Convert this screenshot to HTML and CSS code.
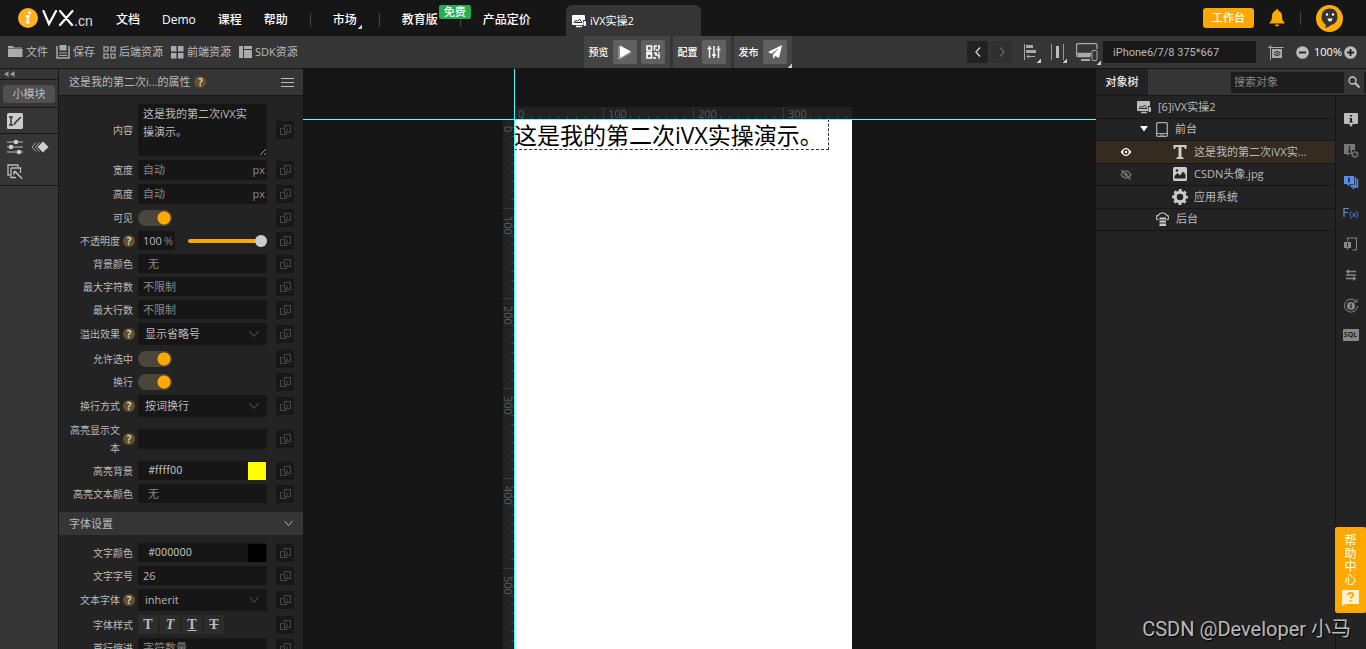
FILE: index.html
```html
<!DOCTYPE html>
<html lang="zh-CN">
<head>
<meta charset="utf-8">
<title>iVX实操2</title>
<link rel="stylesheet" href="styles.css">
</head>
<body>
<svg class="sprite" aria-hidden="true">
  <symbol id="link" viewBox="0 0 18 18"><path d="M8.500 7.500V4.500h6v7h-3M7 7.500H4.500v6h6V11M8.500 7v4.500h2.500v-4" fill="none" stroke="currentColor"/></symbol>
  <symbol id="chev" viewBox="0 0 12 8"><path d="M1.500 1l4.500 5.500L10.500 1" fill="none" stroke="currentColor"/></symbol>
  <symbol id="app" viewBox="0 0 16 14"><path d="M2 1h11a1 1 0 0 1 1 1v4h-2v5H2a1 1 0 0 1-1-1V2a1 1 0 0 1 1-1z" fill="currentColor"/><path d="M3 8.500l2-2.500 1.500 1.500L8.500 5l2.500 3.500z" fill="none" stroke="#333"/><path d="M5 12.500h6" stroke="currentColor" stroke-width="1.500"/><rect x="12.500" y="7" width="2.500" height="5" rx="1" fill="currentColor"/></symbol>
  <symbol id="info" viewBox="0 0 16 16"><path d="M2 1h12a1 1 0 0 1 1 1v9a1 1 0 0 1-1 1h-4l-2 3-2-3H2a1 1 0 0 1-1-1V2a1 1 0 0 1 1-1z" fill="currentColor"/><path d="M7 3h2v1.500H7zM6.500 6H9v3.500h.7v1H6.300v-1H7V7h-.5z" fill="#232323"/></symbol>
</svg>
<div class="app">
  <header class="topbar">
    <a class="logo" href="#" aria-label="iVX.cn">
      <svg width="20" height="20" viewBox="0 0 20 20"><circle cx="10" cy="10" r="10" fill="#ffb11f"/><circle cx="11.500" cy="4.700" r="1.500" fill="#fff"/><path d="M7.500 8.300h3.200l-1.600 5.700q-.1 1.500 2.400 0" fill="none" stroke="#fff" stroke-width="2"/></svg>
      <svg width="32" height="16" viewBox="0 0 32 16"><path d="M1.500 1l5.500 13L14 1M18 1l12 14M30.500 1L18 15" fill="none" stroke="#fff" stroke-width="2.200" stroke-linecap="round"/></svg>
      <span>.cn</span>
    </a>
    <nav class="nav">
      <a href="#">文档</a><a href="#">Demo</a><a href="#">课程</a><a href="#">帮助</a>
      <i class="rule"></i><a href="#" class="more">市场</a><i class="rule"></i>
      <a href="#" class="edu">教育版<b>免费</b></a><i class="rule"></i><a href="#">产品定价</a>
    </nav>
    <a class="tab" href="#"><svg width="16" height="14"><use href="#app"/></svg>iVX实操2</a>
    <div class="account">
      <button class="work">工作台</button>
      <svg width="16" height="18" viewBox="0 0 16 18"><path d="M8 0q1.300 0 1.300 1.500Q13 3 13 7q0 5 2.500 6.500v1H.5v-1Q3 12 3 7q0-4 3.700-5.500Q6.700 0 8 0zM6 15.500h4q0 2-2 2t-2-2z" fill="#ffa800"/></svg>
      <i class="rule"></i>
      <svg width="27" height="27" viewBox="0 0 27 27"><circle cx="13.500" cy="13.500" r="13.500" fill="#ffab0a"/><path d="M13.500 3.500q8 0 8 8.500 0 6.500-6.500 8Q12 23 8 23.500q2.500-1.500 1.500-4Q5.500 17 5.500 12q0-8 8-8.500z" fill="#333"/><g fill="#fff"><circle cx="11" cy="9.500" r="1.200"/><circle cx="17" cy="9.500" r="1.200"/><path d="M11.500 13.500h5q-.5 3-2.500 3t-2.500-3z"/></g></svg>
    </div>
  </header>

  <div class="toolbar">
    <div class="files">
      <button><svg width="15" height="14" viewBox="0 0 15 14"><path d="M0 1h5l1 1.500h8v1H0zM0 4h14.500v8H0z" fill="#aaa"/></svg>文件</button>
      <button><svg width="14" height="14" viewBox="0 0 14 14"><path d="M1 1v12h12V1" fill="none" stroke="#aaa" stroke-width="1.500"/><path d="M4 0h6v5H4zM3 8h8M3 10.500h8" fill="#aaa" stroke="#aaa"/></svg>保存</button>
      <button><svg width="13" height="13" viewBox="0 0 13 13"><path d="M1 1h4v4H1zM8 1h4v4H8zM1 8h4v4H1zM8 8h4v4H8z" fill="none" stroke="#999" stroke-width="1.500"/></svg>后端资源</button>
      <button><svg width="13" height="13" viewBox="0 0 13 13"><path d="M0 0h5.500v5.500H0zM7 0h5.500v5.500H7zM0 7h5.500v5.500H0zM7 7h5.500v5.500H7z" fill="#aaa"/></svg>前端资源</button>
      <button><svg width="13" height="13" viewBox="0 0 13 13"><path d="M0 0h4v12H0zM5 0h8v3H5zM5 4h8v8H5z" fill="#aaa"/></svg>SDK资源</button>
    </div>
    <div class="runs">
      <div class="run"><span>预览</span>
        <button aria-label="播放"><svg width="16" height="16" viewBox="0 0 16 16"><path d="M3 1.500l11 6-11 6.500z" fill="#fff"/><path d="M2 2v13l12-6.500" fill="none" stroke="#bbb"/></svg></button>
        <button aria-label="二维码"><svg width="16" height="16" viewBox="0 0 16 16"><path d="M2 2h4.500v4.500H2zM9.500 1.500v5M9.500 2H12M14 1v4M14 6h-3M2 10h4.500v4H2zM9 9h2v2h3v3.500M8 14h3M1 8.500h6M14 8v1.500" fill="none" stroke="#fff" stroke-width="1.600"/></svg></button></div>
      <div class="run"><span>配置</span><button aria-label="配置"><svg width="14" height="14" viewBox="0 0 14 14"><path d="M2.500 1v12M7 1v12M11.500 1v12M.5 3.500h4M5 10h4M9.500 4.500h4" stroke="#fff" stroke-width="1.400"/></svg></button></div>
      <div class="run more"><span>发布</span><button aria-label="发布"><svg width="16" height="16" viewBox="0 0 16 16"><path d="M15 1L1 8l3.500 1.700L12 4 6 10.500V15l2.300-3 3.700 2z" fill="#fff"/></svg></button></div>
    </div>
    <div class="view">
      <button class="step" aria-label="后退"><svg width="8" height="12" viewBox="0 0 8 12"><path d="M6 1.500L2 6l4 4.500" fill="none" stroke="#ccc" stroke-width="1.400"/></svg></button>
      <button class="step off" aria-label="前进"><svg width="8" height="12" viewBox="0 0 8 12"><path d="M2 1.500L6 6l-4 4.500" fill="none" stroke="#666" stroke-width="1.200"/></svg></button>
      <button class="more align" aria-label="对齐"><svg width="14" height="16" viewBox="0 0 14 16"><path d="M.5 0v16" stroke="#aaa"/><path d="M2 1h7v3H2zM2 6h10v3H2z" fill="#aaa"/><path d="M3 12.500h8M5 10.500l-2 2 2 2" fill="none" stroke="#aaa"/></svg></button>
      <button class="more spread" aria-label="分布"><svg width="13" height="16" viewBox="0 0 13 16"><path d="M.5 0v16M12.500 0v16" stroke="#999"/><path d="M5 2h3v12H5z" fill="#bbb"/></svg></button>
      <button class="more device" aria-label="设备"><svg width="22" height="19" viewBox="0 0 22 19"><path d="M14.500 13.500H2a1.500 1.500 0 0 1-1.500-1.500V2A1.500 1.500 0 0 1 2 .7h17.500A1.500 1.500 0 0 1 21 2v4M1 10.500h14" fill="none" stroke="#aaa" stroke-width="1.300"/><path d="M2 11h13v2H2zM5 16h9v2H5z" fill="#aaa"/><rect x="16" y="7.500" width="5" height="10" rx="1" fill="none" stroke="#aaa"/></svg></button>
      <input class="model" aria-label="设备型号" value="iPhone6/7/8 375*667">
      <button aria-label="截图"><svg width="16" height="15" viewBox="0 0 16 15"><path d="M2.500 0v15M0 2.500h15.500" stroke="#aaa"/><path d="M4 4h10v9H4z" fill="#aaa"/><ellipse cx="9" cy="8.500" rx="3" ry="2" fill="none" stroke="#333"/><circle cx="9" cy="8.500" r="1" fill="#333"/></svg></button>
      <button aria-label="缩小" class="minus"><svg width="13" height="13" viewBox="0 0 13 13"><circle cx="6.500" cy="6.500" r="6.300" fill="#bbb"/><path d="M3 6.500h7" stroke="#222" stroke-width="1.800"/></svg></button>
      <span class="pct">100%</span>
      <button aria-label="放大"><svg width="13" height="13" viewBox="0 0 13 13"><circle cx="6.500" cy="6.500" r="6.300" fill="#bbb"/><path d="M3 6.500h7M6.500 3v7" stroke="#222" stroke-width="1.800"/></svg></button>
    </div>
  </div>

  <main class="main">
    <aside class="rail">
      <div class="fold"><svg width="11" height="6" viewBox="0 0 11 6"><path d="M4.500 0v6L0 3zM10.500 0v6L6 3z" fill="#999"/></svg></div>
      <div class="mod"><button>小模块</button></div>
      <div class="tools"><svg width="16" height="16" viewBox="0 0 16 16"><rect width="16" height="16" rx="1.500" fill="#ccc"/><path d="M2 4h4M4 4v8M2 12h4M7 12l1-2 6-6" fill="none" stroke="#333" stroke-width="1.500"/></svg></div>
      <div class="tools pair">
        <svg width="16" height="16" viewBox="0 0 16 16"><path d="M0 3h16M0 8h16M0 13h16" stroke="#bbb"/><circle cx="9" cy="3" r="2.300" fill="#ccc"/><circle cx="4" cy="8" r="2.300" fill="#ccc"/><circle cx="12" cy="13" r="2.300" fill="#ccc"/></svg>
        <svg width="18" height="12" viewBox="0 0 18 12"><path d="M12 .5L17.500 6 12 11.500 6.500 6z" fill="#ccc"/><path d="M5 1.500L1 6l4 4.500M8.500 1.500L4.500 6l4 4.500" fill="none" stroke="#aaa"/></svg>
        <svg width="16" height="16" viewBox="0 0 16 16"><path d="M3 11H1V1h10v2M4 4h9.500v5M9 13.500H4V4" fill="none" stroke="#bbb" stroke-width="1.300"/><path d="M6.500 10.500l1-3 2 1M9 8.500l6 6" fill="none" stroke="#ccc" stroke-width="1.400"/></svg>
      </div>
    </aside>

    <form class="props">
      <h2 class="head">这是我的第二次i...的属性<i class="q">?</i><svg class="menu" width="13" height="9" viewBox="0 0 13 9"><path d="M0 .5h13M0 4.500h13M0 8.500h13" stroke="#bbb"/></svg></h2>
      <div class="rows">
        <div class="row area"><label for="f1">内容</label><textarea id="f1">这是我的第二次iVX实操演示。</textarea><button type="button" class="bind" aria-label="绑定"><svg><use href="#link"/></svg></button></div>
        <div class="row tall"><label for="f2">宽度</label><span class="unit"><input id="f2" placeholder="自动"><em>px</em></span><button type="button" class="bind" aria-label="绑定"><svg><use href="#link"/></svg></button></div>
        <div class="row tall"><label for="f3">高度</label><span class="unit"><input id="f3" placeholder="自动"><em>px</em></span><button type="button" class="bind" aria-label="绑定"><svg><use href="#link"/></svg></button></div>
        <div class="row"><label for="f4">可见</label><input id="f4" type="checkbox" class="sw" checked><button type="button" class="bind" aria-label="绑定"><svg><use href="#link"/></svg></button></div>
        <div class="row"><label for="f5" class="hq">不透明度<i class="q">?</i></label><span class="opacity"><span class="unit"><input id="f5" value="100"><em>%</em></span><input type="range" aria-label="不透明度滑块" value="100"></span><button type="button" class="bind" aria-label="绑定"><svg><use href="#link"/></svg></button></div>
        <div class="row"><label for="f6">背景颜色</label><input id="f6" class="in" placeholder="无"><button type="button" class="bind" aria-label="绑定"><svg><use href="#link"/></svg></button></div>
        <div class="row"><label for="f7">最大字符数</label><input id="f7" placeholder="不限制"><button type="button" class="bind" aria-label="绑定"><svg><use href="#link"/></svg></button></div>
        <div class="row"><label for="f8">最大行数</label><input id="f8" placeholder="不限制"><button type="button" class="bind" aria-label="绑定"><svg><use href="#link"/></svg></button></div>
        <div class="row sel"><label for="f9" class="hq">溢出效果<i class="q">?</i></label><span class="drop"><select id="f9"><option>显示省略号</option></select><svg><use href="#chev"/></svg></span><button type="button" class="bind" aria-label="绑定"><svg><use href="#link"/></svg></button></div>
        <div class="row"><label for="f10">允许选中</label><input id="f10" type="checkbox" class="sw" checked><button type="button" class="bind" aria-label="绑定"><svg><use href="#link"/></svg></button></div>
        <div class="row"><label for="f11">换行</label><input id="f11" type="checkbox" class="sw" checked><button type="button" class="bind" aria-label="绑定"><svg><use href="#link"/></svg></button></div>
        <div class="row sel"><label for="f12" class="hq">换行方式<i class="q">?</i></label><span class="drop"><select id="f12"><option>按词换行</option></select><svg><use href="#chev"/></svg></span><button type="button" class="bind" aria-label="绑定"><svg><use href="#link"/></svg></button></div>
        <div class="row two"><label for="f13" class="hq"><span>高亮显示文本</span><i class="q">?</i></label><input id="f13"><button type="button" class="bind" aria-label="绑定"><svg><use href="#link"/></svg></button></div>
        <div class="row"><label for="f14">高亮背景</label><span class="color"><input id="f14" class="in" value="#ffff00"><i class="yellow"></i></span><button type="button" class="bind" aria-label="绑定"><svg><use href="#link"/></svg></button></div>
        <div class="row"><label for="f15">高亮文本颜色</label><input id="f15" class="in" placeholder="无"><button type="button" class="bind" aria-label="绑定"><svg><use href="#link"/></svg></button></div>
      </div>
      <h2 class="head sub">字体设置<svg class="menu" width="11" height="7"><use href="#chev"/></svg></h2>
      <div class="rows">
        <div class="row"><label for="g1">文字颜色</label><span class="color"><input id="g1" class="in" value="#000000"><i class="black"></i></span><button type="button" class="bind" aria-label="绑定"><svg><use href="#link"/></svg></button></div>
        <div class="row"><label for="g2">文字字号</label><input id="g2" value="26"><button type="button" class="bind" aria-label="绑定"><svg><use href="#link"/></svg></button></div>
        <div class="row sel"><label for="g3" class="hq">文本字体<i class="q">?</i></label><span class="drop"><select id="g3"><option>inherit</option></select><svg><use href="#chev"/></svg></span><button type="button" class="bind" aria-label="绑定"><svg><use href="#link"/></svg></button></div>
        <div class="row"><span class="lab">字体样式</span><span class="styles"><button type="button" class="b">T</button><button type="button" class="i">T</button><button type="button" class="u">T</button><button type="button" class="s">T</button></span><button type="button" class="bind" aria-label="绑定"><svg><use href="#link"/></svg></button></div>
        <div class="row"><label for="g5">首行缩进</label><input id="g5" placeholder="字符数量"><button type="button" class="bind" aria-label="绑定"><svg><use href="#link"/></svg></button></div>
      </div>
    </form>

    <section class="stage">
      <div class="ruler top"><span>0</span><span>100</span><span>200</span><span>300</span></div>
      <div class="ruler side-ruler"><span>0</span><span>100</span><span>200</span><span>300</span><span>400</span><span>500</span></div>
      <div class="sheet"><p>这是我的第二次iVX实操演示。</p></div>
      <i class="guide gx"></i><i class="guide gy"></i>
    </section>

    <aside class="objects">
      <div class="ohead"><h2>对象树</h2><div class="search"><input aria-label="搜索对象" placeholder="搜索对象"><button aria-label="搜索"><svg width="12" height="12" viewBox="0 0 12 12"><circle cx="4.500" cy="4.500" r="3.500" fill="none" stroke="#ccc" stroke-width="1.300"/><path d="M7 7l4.500 4.500" stroke="#ccc" stroke-width="1.800"/></svg></button></div></div>
      <div class="obody">
        <ul class="tree">
          <li class="l0"><svg width="16" height="14"><use href="#app"/></svg>[6]iVX实操2</li>
          <li class="l1"><svg class="eye" width="8" height="6" viewBox="0 0 8 6"><path d="M0 0h8L4 5.500z" fill="#fff"/></svg><svg width="12" height="15" viewBox="0 0 12 15"><rect x=".7" y=".7" width="10.600" height="13.600" rx="1" fill="none" stroke="#aaa" stroke-width="1.300"/><path d="M1 11.500h10M4 13h4" stroke="#aaa"/></svg>前台</li>
          <li class="l2 on"><svg class="eye" width="12" height="10" viewBox="0 0 12 10"><path d="M.7 5Q6-3 11.300 5 6 13 .7 5z" fill="#fff"/><circle cx="6" cy="5" r="2.700" fill="#33291f"/><circle cx="6" cy="5" r="1.200" fill="#fff"/></svg><svg width="16" height="16" viewBox="0 0 16 16"><path d="M1.500 1h13v4H13L12 3H9.500v10l2 .5V15h-7v-1.500l2-.5V3H4L3 5H1.500z" fill="#ccc"/></svg>这是我的第二次iVX实...</li>
          <li class="l2"><svg class="eye" width="12" height="11" viewBox="0 0 12 11"><path d="M1 5.500Q6-1.500 11 5.500 6 12.500 1 5.500z" fill="none" stroke="#666" stroke-width="1.500"/><circle cx="6" cy="5.500" r="1.700" fill="#666"/><path d="M1.500 1l9 9.500" stroke="#777" stroke-width="1.400"/></svg><svg width="16" height="16" viewBox="0 0 16 16"><rect x="1" y="1" width="14" height="14" rx="1.500" fill="#ccc"/><path d="M2.500 12.500V10l3-3 2.500 2.500 3-4 2.500 3v4z" fill="#232323"/><circle cx="5" cy="4.500" r="1.300" fill="#232323"/></svg>CSDN头像.jpg</li>
          <li class="l2"><svg width="16" height="16" viewBox="0 0 16 16"><circle cx="8" cy="8" r="4.800" fill="none" stroke="#ccc" stroke-width="3"/><circle cx="8" cy="8" r="6.900" fill="none" stroke="#ccc" stroke-width="2" stroke-dasharray="3 2.420" stroke-dashoffset="1.500"/></svg>应用系统</li>
          <li class="l1"><svg width="13" height="15" viewBox="0 0 13 15"><path d="M2.500 7.500A2 2 0 0 1 2 3.500Q4 .8 6.500.8T11 3.500a2 2 0 0 1-.5 4" fill="none" stroke="#bbb" stroke-width="1.300"/><path d="M3.500 5.500h6.500v2H3.500zM3.500 8.500h6.500v2H3.500zM3.500 11.500h6.500v2.500H3.500z" fill="#ccc"/></svg>后台</li>
        </ul>
        <div class="side">
          <svg class="lit"><use href="#info"/></svg>
          <svg viewBox="0 0 16 16"><path d="M1 1h11v6H9v4H6l-2 2v-2H1z" fill="#777"/><path d="M6.500 3v6M5 9h3" stroke="#232323" stroke-width="1.300"/><circle cx="12" cy="11.500" r="2.600" fill="none" stroke="#777" stroke-width="2" stroke-dasharray="2 .7"/></svg>
          <svg viewBox="0 0 16 16"><path d="M1 2h10v8H7l-2 2-1-2H1z" fill="#568df0"/><path d="M12.500 3v8.500H8l1.500 2M14.500 5v8H11l-1 2" fill="none" stroke="#568df0" stroke-width="1.400"/><path d="M6 3.500v5" stroke="#232323" stroke-width="1.500"/></svg>
          <b class="fx">F<small>(x)</small></b>
          <svg viewBox="0 0 16 16"><path d="M4.500 5V2h9v12h-4" fill="none" stroke="#888"/><path d="M1 6h7v6H5.500L4.500 14l-1-2H1z" fill="#888"/><path d="M4.500 7v4" stroke="#232323"/></svg>
          <svg viewBox="0 0 16 16"><path d="M6 2v5L2.500 4.500zM10 9v5l3.500-2.500z" fill="#888"/><path d="M5 4.500h8M3 8h10M3 11.500h8" stroke="#888" stroke-width="1.400"/></svg>
          <svg viewBox="0 0 16 16"><path d="M13 3.500A6.500 6.500 0 1 0 14.500 8M11 4h3V1" fill="none" stroke="#888"/><circle cx="8" cy="8" r="4" fill="#888"/><path d="M8 5.500v5" stroke="#232323" stroke-width="1.300"/></svg>
          <b class="sql">SQL</b>
        </div>
      </div>
    </aside>
  </main>
</div>
<button class="help"><span>帮助中心</span><svg width="17" height="16" viewBox="0 0 17 16"><path d="M0 0h17v14H4l-4 2z" fill="#fff0cf"/><path d="M6 5q0-2 2.500-2T11 5q0 1.300-1.500 2-.9.500-.9 1.500M8.600 10v1.800" fill="none" stroke="#ffa800" stroke-width="1.800"/></svg></button>
<div class="mark">CSDN @Developer 小马</div>
</body>
</html>
```
FILE: styles.css
```css
* { box-sizing: border-box; }
body { margin: 0; background: #161616; color: #bbb; font: 11px/18px "Open Sans", "Noto Sans CJK SC", sans-serif; color-scheme: dark; overflow: hidden; }
a { color: inherit; text-decoration: none; }
button, input, select, textarea { font: inherit; color: inherit; border: 0; margin: 0; padding: 0; background: none; outline: 0; }
h2, p, ul { margin: 0; padding: 0; font: inherit; list-style: none; }
i, em { font-style: normal; }
svg { display: block; flex: none; }
.sprite { position: absolute; width: 0; height: 0; }
.app { display: grid; grid-template-rows: 36px 32px minmax(0, 1fr); height: 100vh; }

.topbar { display: flex; align-items: center; padding: 0 23px 0 18px; color: #fff; font-size: 12px; font-weight: 500; }
.logo { display: flex; align-items: center; width: 98px; gap: 4px; }
.logo span { font: 14px/16px "Liberation Sans", sans-serif; color: #ddd; padding-top: 5px; margin-left: -4px; }
.nav { display: flex; align-items: center; gap: 22px; padding-top: 3px; white-space: nowrap; }
.rule { width: 1px; height: 14px; background: #444; }
.more { position: relative; }
.more::after { content: ""; position: absolute; right: -5px; bottom: 0; width: 4px; height: 4px; background: linear-gradient(135deg, transparent 50%, #ccc 50%); }
.edu { position: relative; }
.edu b { position: absolute; left: 37px; bottom: 10px; z-index: 1; width: 32px; background: #22b14f; border-radius: 2px; font-size: 11px; line-height: 14px; font-weight: 500; text-align: center; }
.tab { display: flex; align-items: center; align-self: flex-end; gap: 3px; width: 135px; height: 31px; margin-left: 35px; padding-left: 5px; border-radius: 6px 6px 0 0; background: #353535; font-size: 11px; font-weight: 400; }
.account { display: flex; align-items: center; gap: 15px; margin-left: auto; }
.work { width: 51px; height: 20px; background: #ffa800; border-radius: 3px; color: #fff; font-size: 11px; }

.toolbar { display: grid; grid-template-columns: 1fr auto 1fr; padding-left: 9px; background: #353535; }
.toolbar button { display: flex; align-items: center; justify-content: center; }
.files { display: flex; align-items: center; gap: 8px; margin-left: -1px; }
.files button { gap: 3px; white-space: nowrap; }
.runs { display: flex; gap: 3px; color: #fff; }
.run { display: flex; align-items: center; gap: 4px; padding: 0 5px; background: #444; font-size: 10px; font-weight: 500; border-radius: 1px; }
.run button { width: 24px; height: 24px; background: #606060; border-radius: 2px; }
.run.more::after { right: 0; }
.view { display: flex; align-items: center; justify-content: flex-end; gap: 12px; padding-right: 9px; }
.view .step { width: 21px; height: 22px; background: #222; border-radius: 2px; margin-right: -9px; }
.view .step.off { background: #303030; margin-right: 0; }
.view .device { margin-right: -7px; }
.view .align { margin-right: 1px; }
.view .more::after { right: -3px; bottom: -3px; }
.model { width: 153px; height: 22px; padding: 0 10px; background: #181818; }
.model, .color input { font-family: Roboto, "Noto Sans CJK SC", sans-serif; }
.minus { margin-right: -7px; }
.pct { color: #fff; margin-right: -10px; }

.main { display: grid; grid-template-columns: 59px 244px minmax(0, 1fr) 270px; min-height: 0; border-top: 1px solid #161616; }
.rail { background: #353535; border-right: 1px solid #161616; }
.rail > div { border-bottom: 1px solid #161616; }
.fold { padding: 2px 0 2px 4px; height: 11px; }
.mod { height: 28px; padding: 5px 3px; }
.mod button { width: 100%; height: 18px; border-radius: 3px; background: #505050; display: block; }
.tools { padding: 5px 7px; height: 26px; }
.tools.pair { display: flex; flex-wrap: wrap; align-items: center; gap: 9px 8px; height: 52px; }

.props { background: #232323; overflow: hidden; }
.head { display: flex; align-items: center; height: 27px; padding: 0 9px 0 10px; background: #353535; border-bottom: 1px solid #161616; }
.head.sub { height: 23px; border: 0; margin-top: 9px; }
.menu { margin-left: auto; }
.q { flex: none; width: 12px; height: 12px; border-radius: 50%; background: #63502c; color: #eee; font-size: 10px; line-height: 12px; font-weight: 600; text-align: center; }
.head .q { margin-left: 4px; }
.rows { display: flex; flex-direction: column; gap: 4px; padding: 8px 9px 0 0; }
.row { display: grid; grid-template-columns: 75px minmax(0, 1fr) 18px; column-gap: 4px; height: 19px; align-items: center; }
.row.tall { height: 20px; }
.row.sel { height: 22px; }
.row.two { height: 36px; }
.row.area { height: 52px; }
.row label, .lab { font-size: 10px; text-align: right; padding-right: 1px; }
.row .hq { display: flex; align-items: center; justify-content: flex-end; gap: 3px; padding: 0; margin-right: -1px; }
.two .hq span { width: 54px; }
.row > input, .row > span:nth-child(2), .row textarea { width: calc(100% - 5px); height: 100%; }
.row > input:not(.sw), .unit, .drop, .color, .row textarea { background: #161616; border-radius: 2px; padding-left: 5px; }
.row.two > input { height: 20px; }
.row > input.in:not(.sw), .color .in { padding-left: 10px; }
.row textarea { display: block; padding: 1px 14px 0 5px; resize: both; overflow: hidden; }
input::placeholder { color: #888; opacity: 1; }
.unit, .color { display: flex; align-items: center; padding-right: 2px; }
.unit input, .color input { flex: 1; min-width: 0; }
.unit em { color: #888; }
.row .color { padding: 0 1px 0 0; }
.color i { width: 18px; height: 18px; }
.yellow { background: #ff0; }
.black { background: #000; }
.row .sw { appearance: none; width: 34px; height: 16px; border-radius: 8px; background: radial-gradient(circle at 26px 8px, #ffa800 6px, transparent 7px) #4c453a; }
.opacity { display: flex; align-items: center; gap: 13px; }
.opacity .unit { width: 37px; height: 100%; }
.opacity input[type="range"] { appearance: none; flex: 1; min-width: 0; height: 4px; border-radius: 2px; background: #ffa800; }
input[type="range"]::-webkit-slider-thumb { appearance: none; width: 12px; height: 12px; border-radius: 50%; background: #ccc; }
.drop { display: grid; align-items: center; }
.drop select { appearance: none; grid-area: 1 / 1; height: 20px; width: 100%; padding-left: 2px; }
.drop svg { grid-area: 1 / 1; justify-self: end; width: 12px; height: 8px; margin-right: 7px; color: #555; pointer-events: none; }
.bind { width: 18px; height: 18px; background: #181818; color: #4a4a4a; }
.bind svg { width: 18px; height: 18px; }
.styles { display: flex; gap: 2px; }
.styles button { width: 20px; height: 19px; background: #2c2c2c; font: 14px/18px "Liberation Serif", serif; font-weight: 700; }
.styles .i { font-style: italic; }
.styles .u { text-decoration: underline; }
.styles .s { text-decoration: line-through; }

.stage { position: relative; display: grid; grid-template-columns: 11px 338px; grid-template-rows: 12px 1fr; justify-content: center; padding: 38px 44px 0 0; background: #161616; overflow: hidden; }
.ruler { display: flex; background: #222; color: #5a5a5a; line-height: 14px; }
.ruler span { flex: 0 0 90px; padding-left: 4px; }
.ruler.top { grid-column: 2; min-width: 0; background: repeating-linear-gradient(90deg, transparent 0 89px, #4a371c 89px 90px), linear-gradient(#222 9px, transparent 9px), repeating-linear-gradient(90deg, #222 0 8px, #444 8px 9px); }
.ruler.top span:last-child { flex-basis: 60px; }
.side-ruler { grid-column: 1; flex-direction: column; background: repeating-linear-gradient(transparent 0 89px, #4a371c 89px 90px), linear-gradient(90deg, #222 8px, transparent 8px), repeating-linear-gradient(#222 0 8px, #444 8px 9px); }
.side-ruler span { writing-mode: vertical-rl; padding: 7px 0 0; line-height: 11px; }
.side-ruler span:last-child { flex-basis: 60px; }
.sheet { background: #fff; color: #000; }
.sheet p { width: 315px; height: 31px; border: dashed #333; border-width: 0 1px 1px 0; font-size: 23px; line-height: 32px; font-weight: 400; white-space: nowrap; }
.guide { position: absolute; background: #4ff; }
.gx { left: 0; right: 0; top: 50px; height: 1px; background: #6ff; }
.gy { top: 0; bottom: 0; left: 211px; width: 1px; }

.objects { display: grid; grid-template-rows: 27px 1fr; background: #232323; }
.ohead { display: flex; align-items: center; justify-content: space-between; background: #353535; border-bottom: 1px solid #161616; }
.ohead h2 { align-self: stretch; width: 52px; line-height: 26px; text-align: center; background: #232323; color: #eee; font-weight: 500; }
.search { display: flex; width: 135px; height: 21px; padding: 0 2px 0 3px; background: #1d1d1d; }
.search input { flex: 1; min-width: 0; }
.search button { width: 20px; display: grid; place-items: center; background: #353535; }
.obody { display: grid; grid-template-columns: 1fr 31px; }
.tree { display: grid; grid-template-rows: repeat(6, 1fr); height: 135px; }
.tree li { position: relative; display: flex; align-items: center; border-bottom: 1px solid #161616; gap: 7px; }
.tree .l0 { padding-left: 40px; gap: 6px; }
.tree .l1 { padding-left: 60px; gap: 7px; }
.tree .l2 { padding-left: 76px; gap: 6px; }
.tree .on { background: #352b20; }
.eye { position: absolute; left: 24px; }
.l1 .eye { left: 44px; }
.side { display: flex; flex-direction: column; align-items: center; gap: 15px; padding: 16px 1px 0 0; border-left: 1px solid #161616; }
.side > * { width: 16px; height: 16px; }
.lit { color: #bbb; }
.fx { color: #568df0; font: 12px/16px Roboto, sans-serif; white-space: nowrap; }
.fx small { font-size: 8px; }
.side .sql { height: 12px; border-radius: 1px; background: #888; color: #232323; font-size: 7px; line-height: 12px; text-align: center; }

.help { position: absolute; right: 0; top: 527px; width: 31px; height: 86px; display: flex; flex-direction: column; align-items: center; gap: 4px; padding-top: 7px; border-radius: 2px; background: #ffa800; color: #fff; }
.help span { width: 12px; font-size: 12px; line-height: 13px; }
.mark { position: absolute; right: 15px; bottom: 8px; color: #bbb; font: 20px/24px Roboto, "Noto Sans CJK SC", sans-serif; text-shadow: 1px 1px 1px #000; white-space: nowrap; }
```
